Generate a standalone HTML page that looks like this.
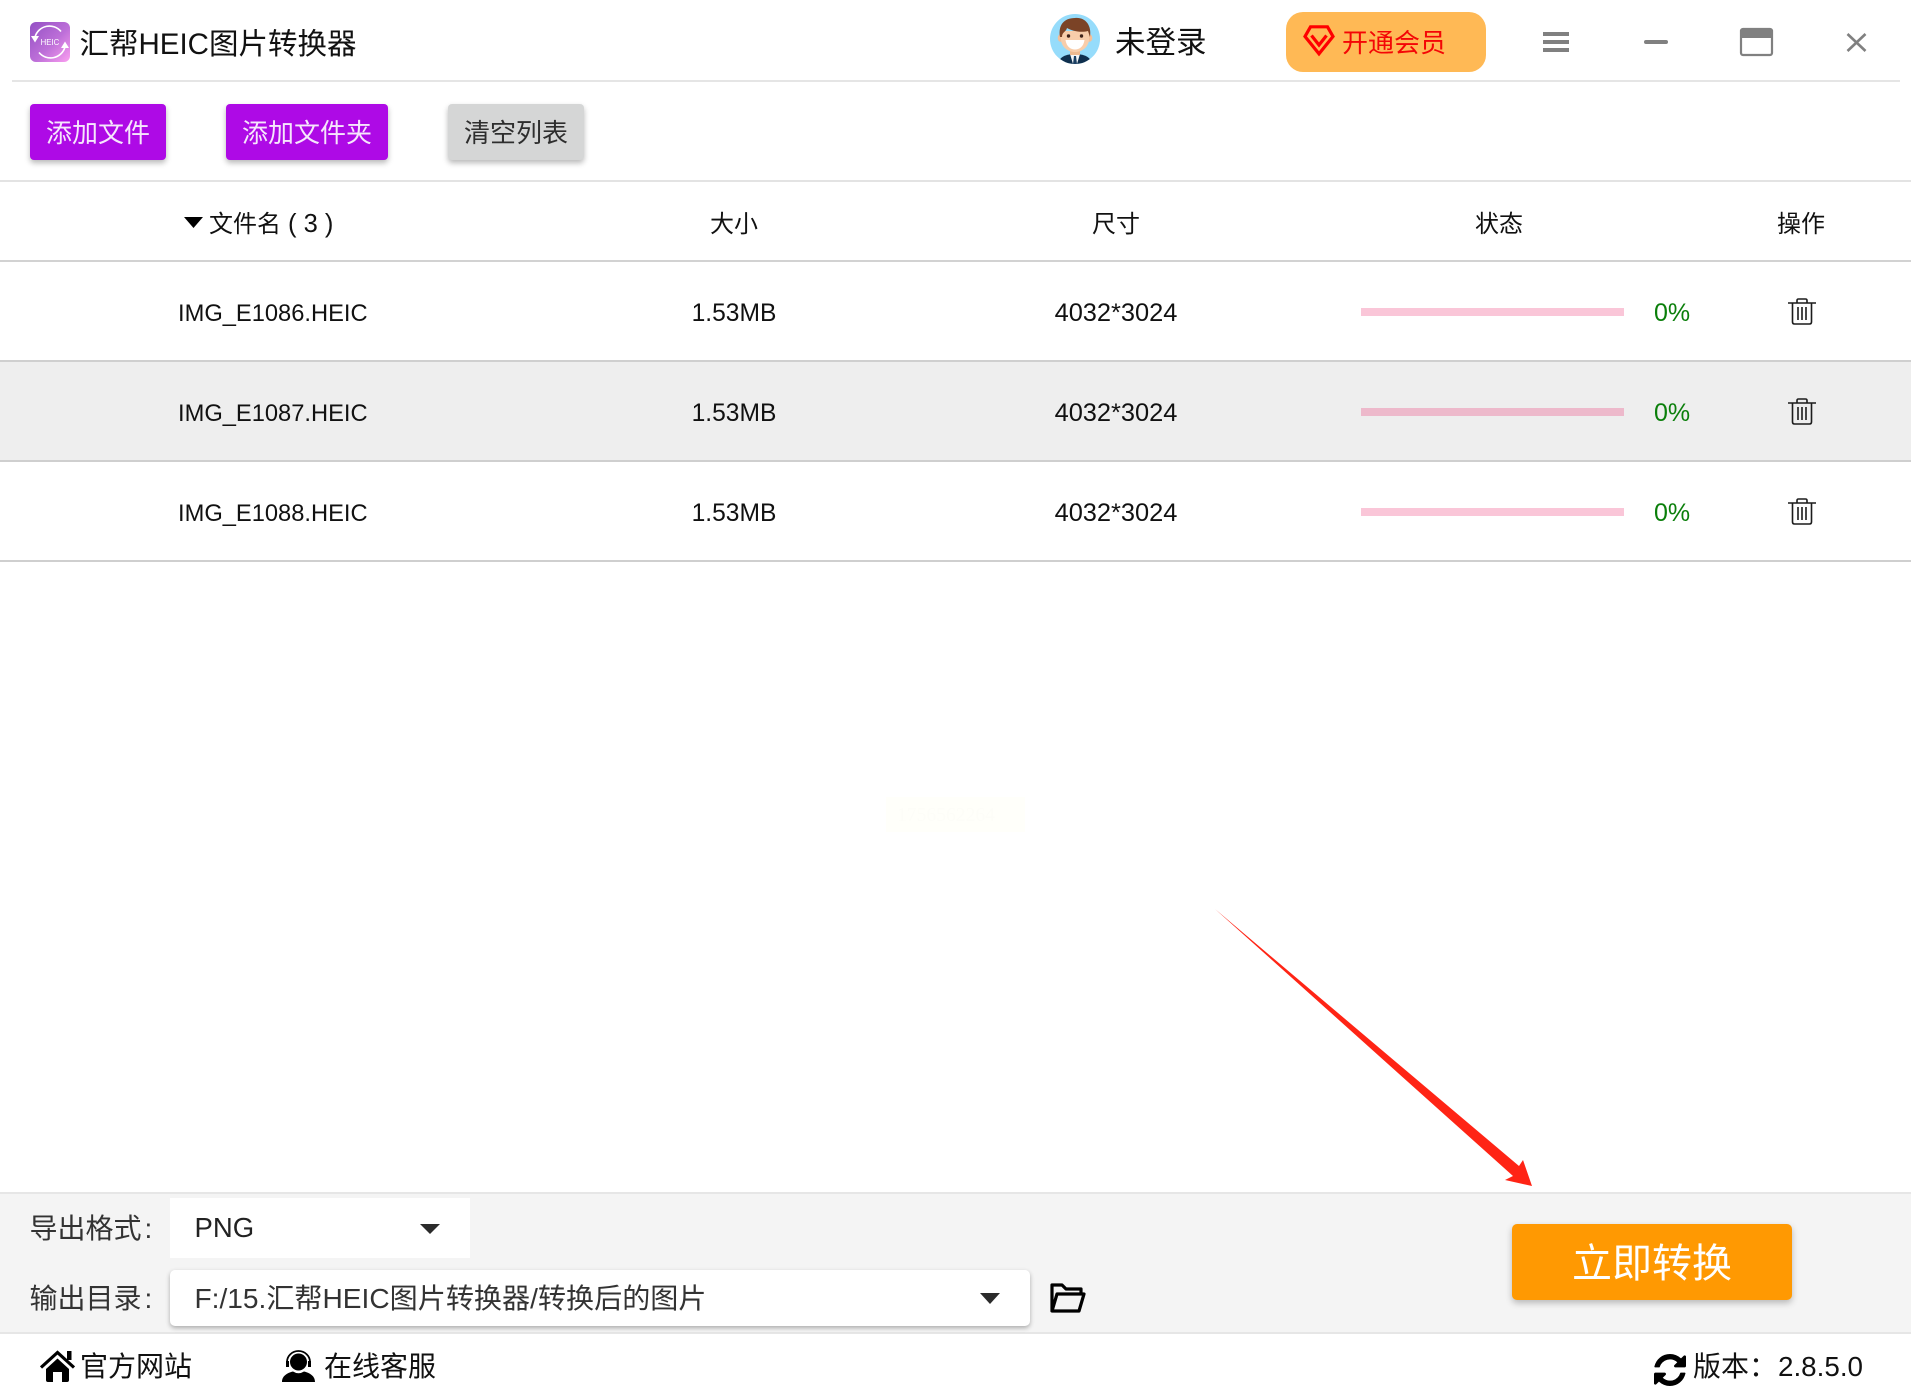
<!DOCTYPE html>
<html lang="zh-CN"><head><meta charset="utf-8"><title>汇帮HEIC图片转换器</title>
<style>
html,body{margin:0;padding:0;background:#fff}
body{position:relative;width:1911px;height:1399px;overflow:hidden;font-family:"Liberation Sans","Noto Sans CJK SC",sans-serif;color:#111}
.a{position:absolute}
.t{position:absolute;white-space:nowrap;line-height:40px;height:40px}
.c{transform:translateX(-50%)}
.btn{position:absolute;top:104px;height:56px;line-height:58px;border-radius:4px;text-align:center;font-size:26px;color:#f6e6fc;background:#ae0ae6;box-shadow:0 3px 6px rgba(0,0,0,.28)}
.line{position:absolute;left:0;width:1911px;height:2px}
.bar{position:absolute;left:1361px;width:263px;height:8px}
.pc{position:absolute;left:1654px;font-size:25px;color:#0b7f0b;line-height:40px;white-space:nowrap}
.nm{font-size:23.7px;left:178px}.sz{font-size:24.6px;left:734px}.dm{font-size:25.4px;left:1116px}
svg{position:absolute;overflow:visible}
</style></head><body>

<!-- title bar -->
<svg style="left:30px;top:22px" width="40" height="40" viewBox="0 0 40 40">
<defs><linearGradient id="g" x1="0" y1="0" x2="1" y2="1"><stop offset="0" stop-color="#9350c4"/><stop offset=".55" stop-color="#bd6fd8"/><stop offset="1" stop-color="#fb9ff0"/></linearGradient></defs>
<rect width="40" height="40" rx="6" fill="url(#g)"/>
<path d="M5 15A15 15 0 0 1 31 9.500M35 25A15 15 0 0 1 9 30.500" fill="none" stroke="#fff" stroke-width="1.600"/>
<path d="M1 14H9L5 20.500ZM31 26H39L35 19.500Z" fill="#fff"/>
<text x="20" y="23" font-size="7.800" fill="#fff" text-anchor="middle" font-family="Liberation Sans">HEIC</text>
</svg>
<div class="t" style="left:79.500px;top:25px;font-size:29.500px;color:#111">汇帮HEIC图片转换器</div>

<svg style="left:1050px;top:14px" width="50" height="50" viewBox="0 0 50 50">
<defs><clipPath id="cp"><circle cx="25" cy="25" r="25"/></clipPath></defs>
<g clip-path="url(#cp)">
<rect width="50" height="50" fill="#96dcfb"/>
<path d="M8 50C9 43 16 40 25 40S41 43 42 50Z" fill="#0f2f4e"/>
<path d="M20 40H30L27 50H23Z" fill="#f4f6f8"/><path d="M24 42H26L27 50H23Z" fill="#1b3f63"/>
<rect x="20" y="32" width="10" height="9" fill="#eeb98f"/>
<ellipse cx="10.500" cy="24" rx="2.800" ry="3.800" fill="#f3c09a"/><ellipse cx="39.500" cy="24" rx="2.800" ry="3.800" fill="#f3c09a"/>
<path d="M11 17H39V25C39 33 32 38 25 38S11 33 11 25Z" fill="#f8cdaa"/>
<path d="M10 23C8 11 14 4 25 4C35 3 42 11 40 23L38 17C31 19 22 17 17 14C16 18 12 18 12 23Z" fill="#7b4326"/>
<circle cx="18.500" cy="22" r="1.700" fill="#40241a"/><circle cx="31.500" cy="22" r="1.700" fill="#40241a"/>
<path d="M15.500 26H34.500C33.500 33 29 35.500 25 35.500S16.500 33 15.500 26Z" fill="#fff"/>
</g></svg>
<div class="t" style="left:1115px;top:23px;font-size:30.500px;color:#111">未登录</div>

<div class="a" style="left:1286px;top:12px;width:200px;height:60px;border-radius:17px;background:#ffb955"></div>
<svg style="left:1303px;top:25px" width="32" height="31" viewBox="0 0 32 31">
<path d="M7.500 1.800H24.500L30 11.500L16 28.800L2 11.500Z" fill="none" stroke="#f00" stroke-width="3.200"/>
<path d="M8.500 10.500L16 20L23.500 10.500" fill="none" stroke="#f00" stroke-width="3.200"/>
</svg>
<div class="t" style="left:1342px;top:23px;font-size:26px;color:#f40606">开通会员</div>

<svg style="left:1543px;top:32px" width="26" height="20" viewBox="0 0 26 20"><path d="M0 0H26V4H0ZM0 8H26V12H0ZM0 16H26V20H0Z" fill="#808080"/></svg>
<div class="a" style="left:1644px;top:40px;width:24px;height:4px;border-radius:2px;background:#808080"></div>
<svg style="left:1740px;top:28px" width="33" height="28" viewBox="0 0 33 28"><rect x="1" y="1" width="31" height="26" rx="2" fill="#fff" stroke="#808080" stroke-width="2.200"/><path d="M1 2.500Q1 1 2.500 1H30.500Q32 1 32 2.500V10H1Z" fill="#808080"/></svg>
<svg style="left:1846px;top:33px" width="21" height="19" viewBox="0 0 21 19"><path d="M1.500 1L19.500 18M19.500 1L1.500 18" stroke="#808080" stroke-width="2.600" fill="none"/></svg>

<div class="a" style="left:12px;top:80px;width:1888px;height:2px;background:#e5e5e5"></div>

<!-- toolbar -->
<div class="btn" style="left:30px;width:136px">添加文件</div>
<div class="btn" style="left:226px;width:162px">添加文件夹</div>
<div class="btn" style="left:448px;width:136px;background:#d5d6d6;color:#2e2e2e">清空列表</div>

<div class="line" style="top:180px;background:#e3e3e3"></div>

<!-- table header -->
<svg style="left:184px;top:217px" width="19" height="11" viewBox="0 0 19 11"><path d="M0 0H19L9.500 11Z" fill="#000"/></svg>
<div class="t" style="left:209px;top:205px;font-size:24px">文件名</div>
<div class="t" style="left:288px;top:204px;font-size:25.500px">( 3 )</div>
<div class="t c" style="left:734px;top:205px;font-size:24px">大小</div>
<div class="t c" style="left:1116px;top:205px;font-size:24px">尺寸</div>
<div class="t c" style="left:1499px;top:205px;font-size:24px">状态</div>
<div class="t c" style="left:1801px;top:205px;font-size:24px">操作</div>
<div class="line" style="top:260px;background:#d2d2d2"></div>

<!-- rows -->
<div class="a" style="left:0;top:362px;width:1911px;height:99px;background:#eee"></div>
<div class="line" style="top:360px;background:#cfcfcf"></div>
<div class="line" style="top:460px;background:#cfcfcf"></div>
<div class="line" style="top:560px;background:#cfcfcf"></div>

<div class="t nm" style="top:294px">IMG_E1086.HEIC</div>
<div class="t sz c" style="top:294px">1.53MB</div>
<div class="t dm c" style="top:293px">4032*3024</div>
<div class="bar" style="top:308px;background:#fac6d8"></div>
<div class="pc" style="top:293px">0%</div>
<svg style="left:1788px;top:298px" width="28" height="27" viewBox="0 0 28 27"><path d="M0 5H28M9 5V2.500Q9 1 10.500 1H17.500Q19 1 19 2.500V5M4.500 5V24Q4.500 26 6.500 26H21.500Q23.500 26 23.500 24V5M10 9V22M14 9V22M18 9V22" fill="none" stroke="#1c1c1c" stroke-width="1.600"/></svg>

<div class="t nm" style="top:394px">IMG_E1087.HEIC</div>
<div class="t sz c" style="top:394px">1.53MB</div>
<div class="t dm c" style="top:393px">4032*3024</div>
<div class="bar" style="top:408px;background:#edb9cb"></div>
<div class="pc" style="top:393px">0%</div>
<svg style="left:1788px;top:398px" width="28" height="27" viewBox="0 0 28 27"><path d="M0 5H28M9 5V2.500Q9 1 10.500 1H17.500Q19 1 19 2.500V5M4.500 5V24Q4.500 26 6.500 26H21.500Q23.500 26 23.500 24V5M10 9V22M14 9V22M18 9V22" fill="none" stroke="#1c1c1c" stroke-width="1.600"/></svg>

<div class="t nm" style="top:494px">IMG_E1088.HEIC</div>
<div class="t sz c" style="top:494px">1.53MB</div>
<div class="t dm c" style="top:493px">4032*3024</div>
<div class="bar" style="top:508px;background:#fac6d8"></div>
<div class="pc" style="top:493px">0%</div>
<svg style="left:1788px;top:498px" width="28" height="27" viewBox="0 0 28 27"><path d="M0 5H28M9 5V2.500Q9 1 10.500 1H17.500Q19 1 19 2.500V5M4.500 5V24Q4.500 26 6.500 26H21.500Q23.500 26 23.500 24V5M10 9V22M14 9V22M18 9V22" fill="none" stroke="#1c1c1c" stroke-width="1.600"/></svg>

<!-- faint watermark -->
<div class="a" style="left:886px;top:797px;width:139px;height:35px;background:#fffffa"></div>
<div class="t" style="left:897px;top:796px;font-size:19.600px;font-family:'Liberation Serif',serif;color:#fdfdf8">1756562264</div>

<!-- red arrow -->
<svg style="left:0;top:0" width="1911" height="1399" viewBox="0 0 1911 1399">
<path d="M1215 909L1519 1166L1523 1160L1532 1186L1505 1180L1513 1176Z" fill="#ff2415"/>
</svg>

<!-- bottom panel -->
<div class="a" style="left:0;top:1192px;width:1911px;height:142px;background:#f4f4f4;border-top:2px solid #e6e6e6;border-bottom:2px solid #e6e6e6;box-sizing:border-box"></div>
<div class="t" style="left:29.500px;top:1209px;font-size:28px;color:#333">导出格式<span style="margin-left:3px">:</span></div>
<div class="a" style="left:170px;top:1198px;width:300px;height:60px;background:#fff"></div>
<div class="t" style="left:194.500px;top:1208px;font-size:27.500px;color:#222">PNG</div>
<svg style="left:420px;top:1224px" width="20" height="10" viewBox="0 0 20 10"><path d="M0 0H20L10 10Z" fill="#2b2b2b"/></svg>

<div class="t" style="left:29.500px;top:1279px;font-size:28px;color:#333">输出目录<span style="margin-left:3px">:</span></div>
<div class="a" style="left:170px;top:1270px;width:860px;height:56px;background:#fff;border-radius:5px;box-shadow:0 2px 5px rgba(0,0,0,.3)"></div>
<div class="t" style="left:194.500px;top:1279px;font-size:28.100px;color:#333">F:/15.汇帮HEIC图片转换器/转换后的图片</div>
<svg style="left:980px;top:1293px" width="20" height="11" viewBox="0 0 20 11"><path d="M0 0H20L10 11Z" fill="#2b2b2b"/></svg>
<svg style="left:1050px;top:1283px" width="36" height="30" viewBox="0 0 36 30"><path d="M2 28V2H12L16 6H31V11M2 28H29L34 11H7Z" fill="none" stroke="#000" stroke-width="3.200" stroke-linejoin="round"/></svg>

<div class="a" style="left:1512px;top:1224px;width:280px;height:76px;background:#ff9902;border-radius:5px;box-shadow:0 3px 7px rgba(0,0,0,.25);text-align:center;line-height:80px;font-size:40px;color:#fff">立即转换</div>

<!-- footer -->
<svg style="left:40px;top:1350px" width="36" height="32" viewBox="0 0 36 32"><path d="M1 17.500L17.500 2.500L34 17.500" fill="none" stroke="#000" stroke-width="3.200"/><path d="M27 1H31.500V10H27Z" fill="#000"/><path d="M6 19L17.500 8.500L29 19V30Q29 32 27 32H22V22H13V32H8Q6 32 6 30Z" fill="#000"/></svg>
<div class="t" style="left:80px;top:1347px;font-size:28px">官方网站</div>
<svg style="left:282px;top:1350px" width="33" height="32" viewBox="0 0 33 32"><circle cx="16.500" cy="12" r="8.500" fill="#000"/><path d="M5 15V12A11.500 11 0 0 1 28 12V15" fill="none" stroke="#000" stroke-width="1.800"/><path d="M4 11H7V17H4ZM26 11H29V17H26Z" fill="#000"/><path d="M0 32C0 26 5 23 11 21.500Q16.500 25 22 21.500C28 23 33 26 33 32Z" fill="#000"/></svg>
<div class="t" style="left:324px;top:1347px;font-size:28px">在线客服</div>

<svg style="left:1654px;top:1354px" width="32" height="32" viewBox="128 128 1536 1536"><path d="M1639 1056q0 5-1 7-64 268-268 434.500t-478 166.500q-146 0-282.500-55t-243.500-157l-129 129q-19 19-45 19t-45-19-19-45v-448q0-26 19-45t45-19h448q26 0 45 19t19 45-19 45l-137 137q71 66 161 102t187 36q134 0 250-65t186-179q11-17 53-117 8-23 30-23h192q13 0 22.500 9.500t9.500 22.500zm25-800v448q0 26-19 45t-45 19h-448q-26 0-45-19t-19-45 19-45l138-138q-148-137-349-137-134 0-250 65t-186 179q-11 17-53 117-8 23-30 23h-199q-13 0-22.500-9.500t-9.500-22.500v-7q65-268 270-434.500t480-166.500q146 0 284 55.500t245 156.500l130-129q19-19 45-19t45 19 19 45z" fill="#000"/></svg>
<div class="t" style="left:1693px;top:1347px;font-size:28px">版本：</div>
<div class="t" style="left:1778px;top:1347px;font-size:27.800px">2.8.5.0</div>
</body></html>
